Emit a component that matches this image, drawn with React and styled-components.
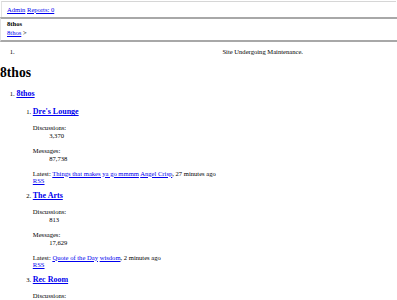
import React from 'react';
import styled, { createGlobalStyle } from 'styled-components';

const GlobalStyle = createGlobalStyle`
    html {
        overflow: hidden;
    }
    body {
        margin: 0;
        background: #fff;
        color: #000;
        font-family: "Liberation Serif", "Times New Roman", serif;
        font-size: 6.6px;
        line-height: 1.2;
    }
    a, a:visited, a:hover, a:active {
        color: #0000ee;
    }
`;

const AdminBar = styled.div`
    margin: 1px 1px 0;
    padding: 3.5px 5px 4px;
    border-top: 1px solid #d6d6d6;
    border-left: 1px solid #e2e2e2;
    line-height: 7.5px;
`;

const Header = styled.div`
    padding: 1px 5px 3px 6px;
    border-top: 2px solid #a8a8a8;
    border-bottom: 2px solid #a8a8a8;
    border-left: 1px solid #e2e2e2;
    line-height: 8.5px;
`;

const SiteName = styled.div`
    font-weight: bold;
`;

const NoticeList = styled.ol`
    margin: 6px 0 0;
    padding-left: 16.4px;
    li span {
        margin-left: 206px;
    }
`;

const PageTitle = styled.h1`
    margin: 9.5px 0 0;
    font-size: 13.6px;
`;

const NodeList = styled.ol`
    margin: ${p => (p.nested ? '0' : '7px 0')};
    padding-left: 16.4px;
`;

const CategoryLink = styled.a`
    display: inline-block;
    margin-bottom: 3px;
    font-size: 8px;
    font-weight: bold;
`;

const ForumTitle = styled.h3`
    margin: 6px 0 6.5px;
    font-size: 8px;
`;

const Stats = styled.dl`
    margin: 7px 0;
`;

const StatValue = styled.dd`
    margin-left: 16.4px;
`;

const LastPost = styled.div`
    margin-top: 7px;
`;

const forums = [
    { title: "Dre's Lounge", discussions: '3,370', messages: '87,738', thread: 'Things that makes ya go mmmm', user: 'Angel Crisp', ago: '27 minutes ago' },
    { title: 'The Arts', discussions: '813', messages: '17,629', thread: 'Quote of the Day', user: 'wisdom', ago: '2 minutes ago' },
    { title: 'Rec Room', discussions: '1,204', messages: '31,552', thread: 'Word association', user: 'Angel Crisp', ago: '5 minutes ago' },
];

const Forum = ({ forum }) => (
    <li>
        <ForumTitle><a href="#">{forum.title}</a></ForumTitle>
        <Stats>
            <dt>Discussions:</dt>
            <StatValue>{forum.discussions}</StatValue>
        </Stats>
        <Stats>
            <dt>Messages:</dt>
            <StatValue>{forum.messages}</StatValue>
        </Stats>
        <LastPost>
            Latest: <a href="#">{forum.thread}</a> <a href="#">{forum.user}</a>, {forum.ago}
        </LastPost>
        <a href="#">RSS</a>
    </li>
);

const App = _ => (
    <>
        <GlobalStyle />
        <AdminBar>
            <a href="#">Admin</a> <a href="#">Reports: 0</a>
        </AdminBar>
        <Header>
            <SiteName>8thos</SiteName>
            <div><a href="#">8thos</a> &gt;</div>
        </Header>
        <NoticeList>
            <li><span>Site Undergoing Maintenance.</span></li>
        </NoticeList>
        <PageTitle>8thos</PageTitle>
        <NodeList>
            <li>
                <CategoryLink href="#">8thos</CategoryLink>
                <NodeList nested>
                    {forums.map(f => <Forum key={f.title} forum={f} />)}
                </NodeList>
            </li>
        </NodeList>
    </>
);

export default App;
